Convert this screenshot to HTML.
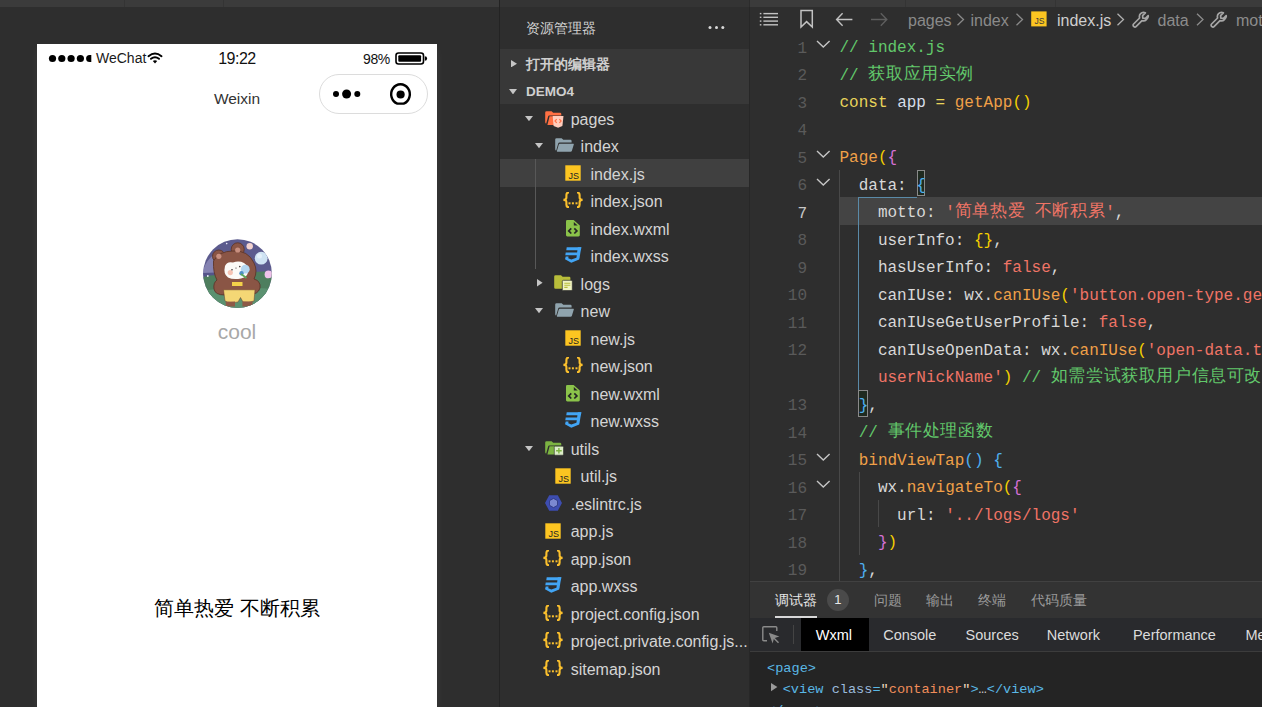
<!DOCTYPE html>
<html><head><meta charset="utf-8">
<style>
*{margin:0;padding:0;box-sizing:border-box}
html,body{width:1262px;height:707px;overflow:hidden;background:#2e2e2e;font-family:"Liberation Sans",sans-serif}
.abs{position:absolute}
#topstrip{left:0;top:0;width:1262px;height:7px;background:#3b3b3b}
.sep{position:absolute;top:0;width:1px;height:7px;background:#343434}
#vsep1{left:499px;top:0;width:1px;height:707px;background:#232323}
#phone{left:37px;top:44px;width:400px;height:663px;background:#fff;overflow:hidden;box-shadow:0 4px 8px rgba(255,255,255,0.06)}
#explorer{left:500px;top:7px;width:249px;height:700px;background:#2e2e2e;overflow:hidden}
.ex{position:absolute;white-space:nowrap;color:#d4d4d4;font-size:16px;line-height:20px}
#editor{left:750px;top:7px;width:512px;height:574px;background:#2e2e2e;overflow:hidden}
.ln{position:absolute;left:0;width:57px;text-align:right;font-family:"Liberation Mono",monospace;font-size:16px;color:#5a5a5a;line-height:20px}
.cl{position:absolute;left:89.5px;white-space:pre;font-family:"Liberation Mono",monospace;font-size:16px;color:#d8d8d8;line-height:20px}
.cj{font-size:17px;letter-spacing:0.6px;position:relative;top:-1.2px}
.cm{color:#62c86b}.kw{color:#e8d35a}.fn{color:#f0a048}.st{color:#f07466}.b1{color:#f5d000}.b2{color:#d670d6}.b3{color:#4fb0f0}.id{color:#d6dde8}
#panel{left:750px;top:581px;width:512px;height:126px;background:#2e2e2e;overflow:hidden}
</style></head><body>

<svg width="0" height="0" style="position:absolute">
<defs>
 <symbol id="i-js" viewBox="0 0 16 16"><rect x="0.3" y="0.3" width="15.4" height="15.4" fill="#fcc521"/><text x="13.9" y="13.6" text-anchor="end" font-family="Liberation Sans" font-size="9" font-weight="400" fill="#222">JS</text></symbol>
 <symbol id="i-json" viewBox="0 0 20 16"><g fill="none" stroke="#fbc02d" stroke-width="2.1" stroke-linecap="butt"><path d="M6 0.5 Q3.4 0.5 3.4 3 V5.6 Q3.4 7.9 0.4 7.9 Q3.4 7.9 3.4 10.2 V12.8 Q3.4 15.3 6 15.3"/><path d="M14 0.5 Q16.6 0.5 16.6 3 V5.6 Q16.6 7.9 19.6 7.9 Q16.6 7.9 16.6 10.2 V12.8 Q16.6 15.3 14 15.3"/></g><g fill="#fbc02d"><rect x="5.5" y="10.3" width="2" height="2"/><rect x="8.9" y="10.3" width="2" height="2"/><rect x="12.5" y="10.3" width="2" height="2"/></g></symbol>
 <symbol id="i-wxml" viewBox="0 0 14 17"><path d="M1.3 0 H7.6 L13.8 5.6 V15.1 Q13.8 16.4 12.5 16.4 H1.3 Q0 16.4 0 15.1 V1.3 Q0 0 1.3 0Z" fill="#8bc34a"/><path d="M7.8 1.9 L11.7 5.4 H7.8Z" fill="#262626"/><path d="M5.3 8.3 L2.7 10.9 L5.3 13.5 M8.3 8.3 L10.9 10.9 L8.3 13.5" fill="none" stroke="#262626" stroke-width="1.7"/></symbol>
 <symbol id="i-wxss" viewBox="0 0 17 16"><g fill="#42a5f5"><path d="M1.7 0.2 H16.3 L15.9 3.3 H1.3Z"/><path d="M12.8 0.2 H16.3 L14.5 11 L11.3 12.3Z"/><path d="M0.7 5.5 H14.3 L13.9 8.3 H0.3Z"/><path d="M0.7 9.6 H3.5 L3.3 11.2 L6.3 12.6 L11.4 10.8 L14.5 10.8 L14.2 12.4 L6.3 15.8 L0 12.3Z"/></g></symbol>
 <symbol id="i-fold" viewBox="0 0 19 14"><path d="M1.6 0.2 H6.6 L8.3 1.8 H15.4 Q16.6 1.8 16.6 3 V4.6 H4.6 Q3.5 4.6 3.2 5.6 L1.2 12.6 Q0.2 12.3 0.2 11.2 V1.6 Q0.2 0.2 1.6 0.2Z" fill="#90a4ae"/><path d="M4.8 5.8 H18.4 Q19 5.8 18.8 6.6 L16.9 12.8 Q16.6 13.8 15.5 13.8 H2.3 Q1.7 13.8 1.9 13.1 L3.8 6.6 Q4 5.8 4.8 5.8Z" fill="#90a4ae"/></symbol>
 <symbol id="i-pages" viewBox="0 0 19 17"><path d="M1.5 0.2 H6.6 L8.2 1.8 H15 Q16.3 1.8 16.3 3.1 V4.6 H4.3 Q3.3 4.6 3.1 5.6 L1.2 12.6 Q0.2 12.3 0.2 11.2 V1.5 Q0.2 0.2 1.5 0.2Z M4.6 5.3 H16.3 V14 H2.4Z" fill="#ff7043"/><path d="M7.7 5 H18.5 L17.4 15 L13.1 16.8 L8.6 15Z" fill="#ffccbc"/><path d="M11.7 8.2 L10 10 L11.7 11.8 M14.4 8.2 L16.1 10 L14.4 11.8" fill="none" stroke="#ff7043" stroke-width="1.2"/></symbol>
 <symbol id="i-logs" viewBox="0 0 19 16"><path d="M1.5 0.2 H7 L8.6 1.8 H15.2 Q16.4 1.8 16.4 3 V13.8 H1.5 Q0.2 13.8 0.2 12.5 V1.5 Q0.2 0.2 1.5 0.2Z" fill="#b8bd3a"/><rect x="8.3" y="5.3" width="10" height="10.3" rx="1.2" fill="#f0f4c3" stroke="#2e2e2e" stroke-width="0.7"/><path d="M10.3 8.2 H16.3 M10.3 10.3 H16.3 M10.3 12.4 H13.6" stroke="#b8bd3a" stroke-width="1.1"/></symbol>
 <symbol id="i-utils" viewBox="0 0 19 15"><path d="M1.5 0.2 H6.6 L8.2 1.8 H15 Q16.3 1.8 16.3 3.1 V4.6 H4.3 Q3.3 4.6 3.1 5.6 L1.2 12.6 Q0.2 12.3 0.2 11.2 V1.5 Q0.2 0.2 1.5 0.2Z M4.6 5.3 H16.3 V13.6 H2.4Z" fill="#7cb342"/><rect x="9.3" y="5.2" width="9.2" height="9" rx="1" fill="#dcedc8" stroke="#2e2e2e" stroke-width="0.6"/><path d="M13.9 6.9 V12.5 M11.1 9.7 H16.7" stroke="#7cb342" stroke-width="1.4"/></symbol>
 <symbol id="i-eslint" viewBox="0 0 17 16"><path d="M4.2 0.3 H12.8 L17 8 L12.8 15.7 H4.2 L0 8Z" fill="#3d4db0"/><path d="M8.5 3.4 L12.5 5.7 V10.3 L8.5 12.6 L4.5 10.3 V5.7Z" fill="#7b88d0" stroke="#2c3578" stroke-width="0.8"/></symbol>
 <symbol id="i-wrench" viewBox="0 0 18 18"><path d="M16.2 4.6 L13.4 7.4 L10.8 7.2 L10.6 4.6 L13.4 1.8 Q10.6 0.6 8.6 2.6 Q6.8 4.4 7.6 7 L1.6 13 Q0.6 14 1.6 15.4 Q3 16.6 4 15.6 L10 9.6 Q12.6 10.4 14.4 8.6 Q16.6 6.6 16.2 4.6Z" fill="none" stroke="#a6a6a6" stroke-width="1.7" stroke-linejoin="round"/></symbol>
</defs></svg>
<div id="topstrip" class="abs"></div>
<div class="sep" style="left:124px"></div><div class="sep" style="left:223px"></div>
<div class="abs" style="left:500px;top:0;width:249px;height:7px;background:#343434"></div><div class="abs" style="left:749px;top:0;width:1px;height:7px;background:#2c2c2c"></div><div class="sep" style="left:905px"></div><div class="sep" style="left:1055px"></div>
<div id="vsep1" class="abs"></div><div class="abs" style="left:749px;top:7px;width:1px;height:700px;background:#272727"></div>
<div id="phone" class="abs">
<svg class="abs" style="left:0;top:0" width="400" height="80" viewBox="0 0 400 80">
 <g fill="#000">
  <circle cx="15.5" cy="14.5" r="3.6"/><circle cx="24.8" cy="14.5" r="3.6"/><circle cx="34.1" cy="14.5" r="3.6"/><circle cx="43.4" cy="14.5" r="3.6"/>
  <path d="M52.7 10.9 h1.6 v7.2 h-1.6 a3.6 3.6 0 0 1 0 -7.2z"/>
 </g>
 <g fill="none" stroke="#000" stroke-width="2" stroke-linecap="round">
  <path d="M111.5 12.2 Q118 6.8 124.5 12.2"/>
  <path d="M114 14.8 Q118 11.6 122 14.8"/>
 </g>
 <path d="M115.8 17 L118 19.6 L120.2 17 Q118 15.6 115.8 17z" fill="#000"/>
 <rect x="359" y="9" width="27.5" height="11" rx="2.5" fill="none" stroke="#000" stroke-width="1.6"/>
 <rect x="361.3" y="11.2" width="22.8" height="6.6" rx="1" fill="#000"/>
 <path d="M387.8 12.2 a2.3 2.3 0 0 1 0 4.6z" fill="#000"/>
</svg>
<div class="abs" style="left:59px;top:4px;font-size:14px;color:#1a1a1a;line-height:20px">WeChat</div>
<div class="abs" style="left:0;width:400px;text-align:center;top:4.2px;font-size:16px;letter-spacing:-0.5px;color:#111;line-height:21px">19:22</div>
<div class="abs" style="left:326px;top:4.5px;font-size:14px;letter-spacing:-0.4px;color:#111;line-height:20px">98%</div>
<div class="abs" style="left:0;width:400px;text-align:center;top:45px;font-size:15.5px;color:#333;line-height:20px">Weixin</div>
<div class="abs" style="left:282px;top:30px;width:109px;height:40px;border:1px solid #dcdcdc;border-radius:20px"></div>
<svg class="abs" style="left:282px;top:30px" width="109" height="40" viewBox="0 0 109 40">
 <circle cx="17" cy="20" r="3"/><circle cx="27.6" cy="20" r="4.5"/><circle cx="38.3" cy="20" r="3"/>
 <path d="M78.33 29.6 A9.3 10 0 1 1 84.67 29.6 Z" fill="none" stroke="#000" stroke-width="2.4"/>
 <circle cx="81.6" cy="20.5" r="4.1"/>
</svg>
<svg id="avatar" class="abs" style="left:165.5px;top:195.3px" width="69" height="69" viewBox="0 0 69 69">
<defs><clipPath id="cc"><circle cx="34.5" cy="34.5" r="34.3"/></clipPath></defs>
<g clip-path="url(#cc)">
 <rect width="69" height="69" fill="#5c5b8e"/>
 <path d="M0 31 Q4 20 12 15 Q18 12 24 13 L26 34 L0 36Z" fill="#8583b2"/>
 <path d="M0 34 L26 33 L26 40 L0 40Z" fill="#55548a"/>
 <path d="M0 38 Q14 34 30 38 Q50 31 69 33 L69 69 L0 69Z" fill="#4e7e5e"/>
 <path d="M0 52 Q30 46 69 50 L69 69 L0 69Z" fill="#5b9170"/>
 <circle cx="58.2" cy="19.2" r="6.4" fill="#cfe3f3"/>
 <circle cx="56.5" cy="17" r="2.5" fill="#e4f0fa"/>
 <circle cx="46.7" cy="7.2" r="3.2" fill="#f2d2cf"/>
 <circle cx="65.5" cy="35.4" r="3.9" fill="#efc2ea"/>
 <circle cx="23.7" cy="4.6" r="0.8" fill="#e8e8f8"/><circle cx="4.8" cy="37" r="0.9" fill="#f0f0ff"/>
 <g fill="#8a5545" stroke="#5e372b" stroke-width="0.9">
  <circle cx="15.8" cy="17.3" r="6.3"/>
  <circle cx="34.7" cy="10.3" r="6.5"/>
  <path d="M10.5 22 Q16 12 30 12 Q45 11 51 24 Q55 32 51 40 Q58 42 57 49 Q55 56 46 55 L40 56 L22 56 Q12 56 11 50 Q10 44 14 41 Q10 34 10.5 22Z"/>
 </g>
 <circle cx="15.8" cy="17.3" r="2.6" fill="#c88f7f"/>
 <circle cx="34.7" cy="11" r="2.6" fill="#c88f7f"/>
 <path d="M22 27 Q24 22 30 23.5 Q36 21.5 41 24 Q46 27 45 32 Q45 38 38 39.5 Q30 41 25 38.5 Q20 35 22 27Z" fill="#fbfaf7"/>
 <circle cx="27.3" cy="33.6" r="2.6" fill="#f6c4b4"/>
 <circle cx="29" cy="30.7" r="0.8" fill="#3a3030"/><circle cx="36.8" cy="27.6" r="0.8" fill="#3a3030"/><circle cx="33" cy="29" r="0.6" fill="#3a3030"/>
 <circle cx="42.3" cy="30.2" r="4.4" fill="#b3d6f0"/>
 <circle cx="38.5" cy="34.2" r="2.2" fill="#4f8fc8"/>
 <path d="M38 35 L43.5 39" stroke="#5caa5c" stroke-width="1.8"/>
 <path d="M29 43 h10.5 v4 h-10.5z" fill="#f4d14a"/>
 <path d="M20.5 50.8 L52 50.8 L51 62 Q46 64 40 63 L37.5 58.5 L35 63 Q26 64.5 22 62Z" fill="#f4d775" stroke="#6a3f31" stroke-width="0.5"/>
 <path d="M22.6 62.8 L32 62.6 L32 67.5 L23 67.5Z M39.4 62.6 L49.8 62.6 L49 67.5 L39.4 67.5Z" fill="#8d5947"/>
</g></svg>
<div class="abs" style="left:0;width:400px;text-align:center;top:273px;font-size:21px;color:#a8a8a8;line-height:30px">cool</div>
<div class="abs" style="left:0;width:400px;text-align:center;top:549px;font-size:20px;color:#000;line-height:30px">简单热爱 不断积累</div>
</div>

<div id="explorer" class="abs">
<div class="ex" style="left:25.5px;top:11px;font-size:14px;font-weight:500;color:#d4d4d4">资源管理器</div>
<svg class="abs" style="left:207px;top:18.5px" width="20" height="4"><circle cx="3" cy="1.6" r="1.5" fill="#d8d8d8"/><circle cx="9.5" cy="1.6" r="1.5" fill="#d8d8d8"/><circle cx="15.8" cy="1.6" r="1.5" fill="#d8d8d8"/></svg>
<div class="abs" style="left:0;top:42px;width:249px;height:55px;background:#383838"></div>
<svg class="abs" style="left:10.50px;top:52.70px" width="6" height="7.4" viewBox="0 0 6 7.4"><path d="M0 0 L6 3.7 L0 7.4Z" fill="#c5c5c5"/></svg>
<div class="ex" style="left:26px;top:46.8px;font-size:14px;font-weight:700;color:#cfcfcf">打开的编辑器</div>
<svg class="abs" style="left:8.70px;top:82.00px" width="8" height="5.4" viewBox="0 0 8 5.4"><path d="M0 0 H8 L4.0 5.4Z" fill="#c5c5c5"/></svg>
<div class="ex" style="left:26px;top:74.8px;font-size:13.5px;font-weight:700;color:#cfcfcf">DEMO4</div>
<div class="abs" style="left:0;top:152.25px;width:249px;height:27.5px;background:#404040"></div>
<div class="abs" style="left:35px;top:152.25px;width:1px;height:110.00px;background:#585858"></div>
<svg class="abs" style="left:25.20px;top:108.90px" width="8" height="5.2" viewBox="0 0 8 5.2"><path d="M0 0 H8 L4.0 5.2Z" fill="#c5c5c5"/></svg>
<svg class="abs" style="left:44.50px;top:103.80px" width="19" height="17"><use href="#i-pages"/></svg>
<div class="ex" style="left:70.70px;top:102.70px">pages</div>
<svg class="abs" style="left:34.80px;top:136.40px" width="8" height="5.2" viewBox="0 0 8 5.2"><path d="M0 0 H8 L4.0 5.2Z" fill="#c5c5c5"/></svg>
<svg class="abs" style="left:54.50px;top:130.70px" width="19" height="14"><use href="#i-fold"/></svg>
<div class="ex" style="left:80.60px;top:130.20px">index</div>
<svg class="abs" style="left:65.30px;top:158.10px" width="16" height="16"><use href="#i-js"/></svg>
<div class="ex" style="left:90.50px;top:157.70px">index.js</div>
<svg class="abs" style="left:63.00px;top:185.00px" width="20" height="16"><use href="#i-json"/></svg>
<div class="ex" style="left:90.50px;top:185.20px">index.json</div>
<svg class="abs" style="left:66.00px;top:212.80px" width="14" height="17"><use href="#i-wxml"/></svg>
<div class="ex" style="left:90.50px;top:212.70px">index.wxml</div>
<svg class="abs" style="left:65.00px;top:240.00px" width="17" height="16"><use href="#i-wxss"/></svg>
<div class="ex" style="left:90.50px;top:240.20px">index.wxss</div>
<svg class="abs" style="left:37.00px;top:272.20px" width="5.6" height="7.6" viewBox="0 0 5.6 7.6"><path d="M0 0 L5.6 3.8 L0 7.6Z" fill="#c5c5c5"/></svg>
<svg class="abs" style="left:54.00px;top:268.00px" width="19" height="16"><use href="#i-logs"/></svg>
<div class="ex" style="left:80.60px;top:267.70px">logs</div>
<svg class="abs" style="left:34.80px;top:301.40px" width="8" height="5.2" viewBox="0 0 8 5.2"><path d="M0 0 H8 L4.0 5.2Z" fill="#c5c5c5"/></svg>
<svg class="abs" style="left:54.50px;top:295.70px" width="19" height="14"><use href="#i-fold"/></svg>
<div class="ex" style="left:80.60px;top:295.20px">new</div>
<svg class="abs" style="left:65.30px;top:323.10px" width="16" height="16"><use href="#i-js"/></svg>
<div class="ex" style="left:90.50px;top:322.70px">new.js</div>
<svg class="abs" style="left:63.00px;top:350.00px" width="20" height="16"><use href="#i-json"/></svg>
<div class="ex" style="left:90.50px;top:350.20px">new.json</div>
<svg class="abs" style="left:66.00px;top:377.80px" width="14" height="17"><use href="#i-wxml"/></svg>
<div class="ex" style="left:90.50px;top:377.70px">new.wxml</div>
<svg class="abs" style="left:65.00px;top:405.00px" width="17" height="16"><use href="#i-wxss"/></svg>
<div class="ex" style="left:90.50px;top:405.20px">new.wxss</div>
<svg class="abs" style="left:25.20px;top:438.90px" width="8" height="5.2" viewBox="0 0 8 5.2"><path d="M0 0 H8 L4.0 5.2Z" fill="#c5c5c5"/></svg>
<svg class="abs" style="left:44.50px;top:434.00px" width="19" height="15"><use href="#i-utils"/></svg>
<div class="ex" style="left:70.70px;top:432.70px">utils</div>
<svg class="abs" style="left:55.30px;top:460.60px" width="16" height="16"><use href="#i-js"/></svg>
<div class="ex" style="left:80.60px;top:460.20px">util.js</div>
<svg class="abs" style="left:44.70px;top:488.20px" width="17" height="16"><use href="#i-eslint"/></svg>
<div class="ex" style="left:70.70px;top:487.70px">.eslintrc.js</div>
<svg class="abs" style="left:45.30px;top:515.60px" width="16" height="16"><use href="#i-js"/></svg>
<div class="ex" style="left:70.70px;top:515.20px">app.js</div>
<svg class="abs" style="left:43.00px;top:542.50px" width="20" height="16"><use href="#i-json"/></svg>
<div class="ex" style="left:70.70px;top:542.70px">app.json</div>
<svg class="abs" style="left:45.00px;top:570.00px" width="17" height="16"><use href="#i-wxss"/></svg>
<div class="ex" style="left:70.70px;top:570.20px">app.wxss</div>
<svg class="abs" style="left:43.00px;top:597.50px" width="20" height="16"><use href="#i-json"/></svg>
<div class="ex" style="left:70.70px;top:597.70px">project.config.json</div>
<svg class="abs" style="left:43.00px;top:625.00px" width="20" height="16"><use href="#i-json"/></svg>
<div class="ex" style="left:70.70px;top:625.20px">project.private.config.js...</div>
<svg class="abs" style="left:43.00px;top:652.50px" width="20" height="16"><use href="#i-json"/></svg>
<div class="ex" style="left:70.70px;top:652.70px">sitemap.json</div>
</div>
<div id="editor" class="abs">
<svg class="abs" style="left:0;top:0" width="512" height="30">
 <g fill="#c2c2c2">
  <rect x="9.8" y="5.9" width="1.6" height="1.4"/><rect x="13.4" y="5.9" width="14.6" height="1.4"/>
  <rect x="9.8" y="9.6" width="1.6" height="1.4"/><rect x="13.4" y="9.6" width="14.6" height="1.4"/>
  <rect x="9.8" y="13.4" width="1.6" height="1.4"/><rect x="13.4" y="13.4" width="14.6" height="1.4"/>
  <rect x="9.8" y="17.1" width="1.6" height="1.4"/><rect x="13.4" y="17.1" width="14.6" height="1.4"/>
 </g>
 <path d="M51 20 V3.6 H62.3 V20 L56.6 14.6Z" fill="none" stroke="#c2c2c2" stroke-width="1.5" stroke-linejoin="miter"/>
 <path d="M102.4 12.5 H86.8 M92.6 6.3 L86.6 12.5 L92.6 18.7" fill="none" stroke="#c2c2c2" stroke-width="1.4"/>
 <path d="M121 12.5 H136.6 M130.8 6.3 L136.8 12.5 L130.8 18.7" fill="none" stroke="#5e5e5e" stroke-width="1.4"/>
 <path d="M207.5 6.8 L213.5 12.5 L207.5 18.2" fill="none" stroke="#8a8a8a" stroke-width="1.3"/>
 <path d="M266.5 6.8 L272.5 12.5 L266.5 18.2" fill="none" stroke="#8a8a8a" stroke-width="1.3"/>
 <path d="M367.5 6.8 L373.5 12.5 L367.5 18.2" fill="none" stroke="#b0b0b0" stroke-width="1.3"/>
 <path d="M447 6.8 L453 12.5 L447 18.2" fill="none" stroke="#8c8c8c" stroke-width="1.3"/>
 <rect x="281.2" y="4.4" width="15.4" height="15" fill="#fcc521"/>
 <text x="294.6" y="17.3" text-anchor="end" font-family="Liberation Sans" font-size="8.6" fill="#3a3a3a">JS</text>
</svg>
<svg class="abs" style="left:382px;top:3.5px" width="18" height="18"><use href="#i-wrench"/></svg>
<svg class="abs" style="left:460px;top:3.5px" width="18" height="18"><use href="#i-wrench"/></svg>
<div class="abs" style="left:158px;top:4px;font-size:16px;color:#8a8a8a;line-height:20px;white-space:nowrap">pages</div>
<div class="abs" style="left:220.5px;top:4px;font-size:16px;color:#8a8a8a;line-height:20px;white-space:nowrap">index</div>
<div class="abs" style="left:307px;top:4px;font-size:16px;color:#cfcfcf;line-height:20px;white-space:nowrap">index.js</div>
<div class="abs" style="left:407.5px;top:4px;font-size:16px;color:#8c8c8c;line-height:20px;white-space:nowrap">data</div>
<div class="abs" style="left:486px;top:4px;font-size:16px;color:#8c8c8c;line-height:20px;white-space:nowrap">motto</div>
<div class="abs" style="left:89px;top:190.25px;width:423px;height:27.5px;background:#444444"></div>
<div class="abs" style="left:89.00px;top:162.75px;width:1px;height:412.50px;background:#484848"></div>
<div class="abs" style="left:108.50px;top:465.25px;width:1px;height:82.50px;background:#484848"></div>
<div class="abs" style="left:127.70px;top:492.75px;width:1px;height:27.50px;background:#484848"></div>
<div class="abs" style="left:108.30px;top:190.25px;width:1px;height:192.50px;background:#5a8aa8"></div>
<div class="abs" style="left:108.30px;top:190.25px;width:58.70px;height:1px;background:#5a8aa8"></div>
<div class="abs" style="left:167.10px;top:162.75px;width:8.4px;height:26.5px;border:1px solid #8a8a8a;background:#1f2a20"></div>
<div class="abs" style="left:108.40px;top:382.75px;width:9.2px;height:27px;border:1px solid #8a8a8a;background:#1f2a20"></div>
<svg class="abs" style="left:66px;top:33.00px" width="15" height="8"><path d="M1 1 L7.3 7 L13.6 1" fill="none" stroke="#c5c5c5" stroke-width="1.4"/></svg>
<svg class="abs" style="left:66px;top:143.00px" width="15" height="8"><path d="M1 1 L7.3 7 L13.6 1" fill="none" stroke="#c5c5c5" stroke-width="1.4"/></svg>
<svg class="abs" style="left:66px;top:170.50px" width="15" height="8"><path d="M1 1 L7.3 7 L13.6 1" fill="none" stroke="#c5c5c5" stroke-width="1.4"/></svg>
<svg class="abs" style="left:66px;top:445.50px" width="15" height="8"><path d="M1 1 L7.3 7 L13.6 1" fill="none" stroke="#c5c5c5" stroke-width="1.4"/></svg>
<svg class="abs" style="left:66px;top:473.00px" width="15" height="8"><path d="M1 1 L7.3 7 L13.6 1" fill="none" stroke="#c5c5c5" stroke-width="1.4"/></svg>
<div class="ln" style="top:31.80px;color:#5a5a5a">1</div>
<div class="cl" style="top:31.30px"><span class="cm">// index.js</span></div>
<div class="ln" style="top:59.30px;color:#5a5a5a">2</div>
<div class="cl" style="top:58.80px"><span class="cm">// <span class="cj">获取应用实例</span></span></div>
<div class="ln" style="top:86.80px;color:#5a5a5a">3</div>
<div class="cl" style="top:86.30px"><span class="kw">const</span> <span class="id">app</span> <span class="kw">=</span> <span class="fn">getApp</span><span class="b1">()</span></div>
<div class="ln" style="top:114.30px;color:#5a5a5a">4</div>
<div class="cl" style="top:113.80px"></div>
<div class="ln" style="top:141.80px;color:#5a5a5a">5</div>
<div class="cl" style="top:141.30px"><span class="fn">Page</span><span class="b1">(</span><span class="b2">{</span></div>
<div class="ln" style="top:169.30px;color:#5a5a5a">6</div>
<div class="cl" style="top:168.80px">  data: <span class="b3">{</span></div>
<div class="ln" style="top:196.80px;color:#c6c6c6">7</div>
<div class="cl" style="top:196.30px">    motto: <span class="st">'<span class="cj">简单热爱</span> <span class="cj">不断积累</span>'</span>,</div>
<div class="ln" style="top:224.30px;color:#5a5a5a">8</div>
<div class="cl" style="top:223.80px">    userInfo: <span class="b1">{}</span>,</div>
<div class="ln" style="top:251.80px;color:#5a5a5a">9</div>
<div class="cl" style="top:251.30px">    hasUserInfo: <span class="st">false</span>,</div>
<div class="ln" style="top:279.30px;color:#5a5a5a">10</div>
<div class="cl" style="top:278.80px">    canIUse: wx.<span class="fn">canIUse</span><span class="b1">(</span><span class="st">'button.open-type.getUserInfo'</span></div>
<div class="ln" style="top:306.80px;color:#5a5a5a">11</div>
<div class="cl" style="top:306.30px">    canIUseGetUserProfile: <span class="st">false</span>,</div>
<div class="ln" style="top:334.30px;color:#5a5a5a">12</div>
<div class="cl" style="top:333.80px">    canIUseOpenData: wx.<span class="fn">canIUse</span><span class="b1">(</span><span class="st">'open-data.type.</span></div>
<div class="cl" style="top:361.30px">    <span class="st">userNickName'</span><span class="b1">)</span> <span class="cm">// <span class="cj">如需尝试获取用户信息可改为</span></span></div>
<div class="ln" style="top:389.30px;color:#5a5a5a">13</div>
<div class="cl" style="top:388.80px">  <span class="b3">}</span>,</div>
<div class="ln" style="top:416.80px;color:#5a5a5a">14</div>
<div class="cl" style="top:416.30px">  <span class="cm">// <span class="cj">事件处理函数</span></span></div>
<div class="ln" style="top:444.30px;color:#5a5a5a">15</div>
<div class="cl" style="top:443.80px">  <span class="fn">bindViewTap</span><span class="b3">()</span> <span class="b3">{</span></div>
<div class="ln" style="top:471.80px;color:#5a5a5a">16</div>
<div class="cl" style="top:471.30px">    wx.<span class="fn">navigateTo</span><span class="b1">(</span><span class="b2">{</span></div>
<div class="ln" style="top:499.30px;color:#5a5a5a">17</div>
<div class="cl" style="top:498.80px">      url: <span class="st">'../logs/logs'</span></div>
<div class="ln" style="top:526.80px;color:#5a5a5a">18</div>
<div class="cl" style="top:526.30px">    <span class="b2">}</span><span class="b1">)</span></div>
<div class="ln" style="top:554.30px;color:#5a5a5a">19</div>
<div class="cl" style="top:553.80px">  <span class="b3">}</span>,</div>
</div>
<div id="panel" class="abs">
<div class="abs" style="left:0;top:0;width:512px;height:37px;background:#333333"></div>
<div class="abs" style="left:0;top:0;width:512px;height:1px;background:#414141"></div>
<div class="abs" style="left:25px;top:9px;font-size:14px;color:#e6e6e6;line-height:20px">调试器</div>
<div class="abs" style="left:25.3px;top:34.5px;width:42px;height:2px;background:#d8d8d8"></div>
<div class="abs" style="left:76.8px;top:8px;width:22px;height:22px;border-radius:11px;background:#4a4a4a;color:#e8e8e8;font-size:13px;line-height:22px;text-align:center">1</div>
<div class="abs" style="left:123.90px;top:9px;font-size:14px;color:#9a9a9a;line-height:20px;white-space:nowrap">问题</div>
<div class="abs" style="left:175.70px;top:9px;font-size:14px;color:#9a9a9a;line-height:20px;white-space:nowrap">输出</div>
<div class="abs" style="left:228.20px;top:9px;font-size:14px;color:#9a9a9a;line-height:20px;white-space:nowrap">终端</div>
<div class="abs" style="left:281.30px;top:9px;font-size:14px;color:#9a9a9a;line-height:20px;white-space:nowrap">代码质量</div>
<div class="abs" style="left:0;top:37px;width:512px;height:32.5px;background:#292a2d"></div>
<div class="abs" style="left:0;top:69.5px;width:512px;height:1px;background:#3c3c3c"></div>
<div class="abs" style="left:51px;top:37px;width:68px;height:32.5px;background:#000"></div>
<div class="abs" style="left:43px;top:44px;width:1px;height:19px;background:#444"></div>
<svg class="abs" style="left:12px;top:45px" width="19" height="18"><path d="M5 14.8 H1.8 Q0.8 14.8 0.8 13.8 V1.8 Q0.8 0.8 1.8 0.8 H13.8 Q14.8 0.8 14.8 1.8 V5" fill="none" stroke="#8a8a8a" stroke-width="1.4"/><path d="M6.8 6.8 L17.4 10.6 L12.8 12 L17 16.2 L16 17.2 L11.8 13 L10.6 17.4Z" fill="#8a8a8a"/></svg>
<div class="abs" style="left:65.80px;top:44px;font-size:14.5px;color:#ffffff;line-height:20px;white-space:nowrap">Wxml</div>
<div class="abs" style="left:133.20px;top:44px;font-size:14.5px;color:#dcdcdc;line-height:20px;white-space:nowrap">Console</div>
<div class="abs" style="left:215.50px;top:44px;font-size:14.5px;color:#dcdcdc;line-height:20px;white-space:nowrap">Sources</div>
<div class="abs" style="left:296.80px;top:44px;font-size:14.5px;color:#dcdcdc;line-height:20px;white-space:nowrap">Network</div>
<div class="abs" style="left:382.90px;top:44px;font-size:14.5px;color:#dcdcdc;line-height:20px;white-space:nowrap">Performance</div>
<div class="abs" style="left:495.40px;top:44px;font-size:14.5px;color:#dcdcdc;line-height:20px;white-space:nowrap">Memory</div>
<div class="abs" style="left:0;top:70.5px;width:512px;height:56px;background:#242424"></div>
<div class="abs" style="left:17px;top:77.5px;font-family:'Liberation Mono',monospace;font-size:13.6px;color:#5ab8e6;line-height:20px;white-space:pre">&lt;page&gt;</div>
<svg class="abs" style="left:21.4px;top:101.5px" width="7" height="9"><path d="M0 0 L6.4 4.1 L0 8.2Z" fill="#9a9a9a"/></svg>
<div class="abs" style="left:32.7px;top:98.5px;font-family:'Liberation Mono',monospace;font-size:13.6px;color:#5ab8e6;line-height:20px;white-space:pre">&lt;view <span style="color:#9bbbdc">class</span>=<span style="color:#f0d9c0">"</span><span style="color:#f08d5a">container</span><span style="color:#f0d9c0">"</span>&gt;<span style="color:#ccc">…</span>&lt;/view&gt;</div>
<div class="abs" style="left:17px;top:119.5px;font-family:'Liberation Mono',monospace;font-size:13.6px;color:#5ab8e6;line-height:20px;white-space:pre">&lt;/page&gt;</div>
</div>
</body></html>
